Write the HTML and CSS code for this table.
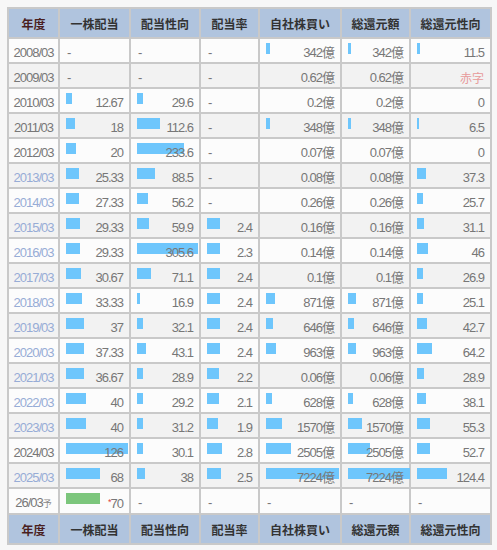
FILE: index.html
```html
<!DOCTYPE html>
<html lang="ja">
<head>
<meta charset="utf-8">
<link rel="stylesheet" href="styles.css">
</head>
<body>
<table class="tbl">
<colgroup>
<col class="c-year"><col class="c-div"><col class="c-pay"><col class="c-rate"><col class="c-buy"><col class="c-tot"><col class="c-totp">
</colgroup>
<thead>
<tr class="head"><th class="h-year">年度</th><th>一株配当</th><th>配当性向</th><th>配当率</th><th>自社株買い</th><th>総還元額</th><th>総還元性向</th></tr>
</thead>
<tbody>
<tr class="odd"><td class="yr">2008/03</td><td class="na">-</td><td class="na">-</td><td class="na">-</td><td class="num"><span class="bar" style="width:3.5px"></span>342億</td><td class="num"><span class="bar" style="width:2.9px"></span>342億</td><td class="num"><span class="bar" style="width:2.7px"></span>11.5</td></tr>
<tr class="even"><td class="yr">2009/03</td><td class="na">-</td><td class="na">-</td><td class="na">-</td><td class="num">0.62億</td><td class="num">0.62億</td><td class="num red">赤字</td></tr>
<tr class="odd"><td class="yr">2010/03</td><td class="num"><span class="bar" style="width:6.2px"></span>12.67</td><td class="num"><span class="bar" style="width:5.9px"></span>29.6</td><td class="na">-</td><td class="num">0.2億</td><td class="num">0.2億</td><td class="num">0</td></tr>
<tr class="even"><td class="yr">2011/03</td><td class="num"><span class="bar" style="width:8.9px"></span>18</td><td class="num"><span class="bar" style="width:22.6px"></span>112.6</td><td class="na">-</td><td class="num"><span class="bar" style="width:3.5px"></span>348億</td><td class="num"><span class="bar" style="width:3px"></span>348億</td><td class="num"><span class="bar" style="width:1.6px"></span>6.5</td></tr>
<tr class="odd"><td class="yr">2012/03</td><td class="num"><span class="bar" style="width:9.8px"></span>20</td><td class="num"><span class="bar" style="width:46.9px"></span>233.6</td><td class="na">-</td><td class="num">0.07億</td><td class="num">0.07億</td><td class="num">0</td></tr>
<tr class="even"><td class="yr lk">2013/03</td><td class="num"><span class="bar" style="width:12.5px"></span>25.33</td><td class="num"><span class="bar" style="width:17.8px"></span>88.5</td><td class="na">-</td><td class="num">0.08億</td><td class="num">0.08億</td><td class="num"><span class="bar" style="width:8.9px"></span>37.3</td></tr>
<tr class="odd"><td class="yr lk">2014/03</td><td class="num"><span class="bar" style="width:13.4px"></span>27.33</td><td class="num"><span class="bar" style="width:11.3px"></span>56.2</td><td class="na">-</td><td class="num">0.26億</td><td class="num">0.26億</td><td class="num"><span class="bar" style="width:6.1px"></span>25.7</td></tr>
<tr class="even"><td class="yr lk">2015/03</td><td class="num"><span class="bar" style="width:14.4px"></span>29.33</td><td class="num"><span class="bar" style="width:12px"></span>59.9</td><td class="num"><span class="bar" style="width:13.3px"></span>2.4</td><td class="num">0.16億</td><td class="num">0.16億</td><td class="num"><span class="bar" style="width:7.4px"></span>31.1</td></tr>
<tr class="odd"><td class="yr lk">2016/03</td><td class="num"><span class="bar" style="width:14.4px"></span>29.33</td><td class="num"><span class="bar" style="width:61.3px"></span>305.6</td><td class="num"><span class="bar" style="width:12.8px"></span>2.3</td><td class="num">0.14億</td><td class="num">0.14億</td><td class="num"><span class="bar" style="width:11px"></span>46</td></tr>
<tr class="even"><td class="yr lk">2017/03</td><td class="num"><span class="bar" style="width:15.1px"></span>30.67</td><td class="num"><span class="bar" style="width:14.3px"></span>71.1</td><td class="num"><span class="bar" style="width:13.3px"></span>2.4</td><td class="num">0.1億</td><td class="num">0.1億</td><td class="num"><span class="bar" style="width:6.4px"></span>26.9</td></tr>
<tr class="odd"><td class="yr lk">2018/03</td><td class="num"><span class="bar" style="width:16.4px"></span>33.33</td><td class="num"><span class="bar" style="width:3.4px"></span>16.9</td><td class="num"><span class="bar" style="width:13.3px"></span>2.4</td><td class="num"><span class="bar" style="width:8.8px"></span>871億</td><td class="num"><span class="bar" style="width:7.5px"></span>871億</td><td class="num"><span class="bar" style="width:6px"></span>25.1</td></tr>
<tr class="even"><td class="yr lk">2019/03</td><td class="num"><span class="bar" style="width:18.2px"></span>37</td><td class="num"><span class="bar" style="width:6.4px"></span>32.1</td><td class="num"><span class="bar" style="width:13.3px"></span>2.4</td><td class="num"><span class="bar" style="width:6.5px"></span>646億</td><td class="num"><span class="bar" style="width:5.6px"></span>646億</td><td class="num"><span class="bar" style="width:10.2px"></span>42.7</td></tr>
<tr class="odd"><td class="yr lk">2020/03</td><td class="num"><span class="bar" style="width:18.4px"></span>37.33</td><td class="num"><span class="bar" style="width:8.6px"></span>43.1</td><td class="num"><span class="bar" style="width:13.3px"></span>2.4</td><td class="num"><span class="bar" style="width:9.7px"></span>963億</td><td class="num"><span class="bar" style="width:8.3px"></span>963億</td><td class="num"><span class="bar" style="width:15.3px"></span>64.2</td></tr>
<tr class="even"><td class="yr lk">2021/03</td><td class="num"><span class="bar" style="width:18px"></span>36.67</td><td class="num"><span class="bar" style="width:5.8px"></span>28.9</td><td class="num"><span class="bar" style="width:12.2px"></span>2.2</td><td class="num">0.06億</td><td class="num">0.06億</td><td class="num"><span class="bar" style="width:6.9px"></span>28.9</td></tr>
<tr class="odd"><td class="yr lk">2022/03</td><td class="num"><span class="bar" style="width:19.7px"></span>40</td><td class="num"><span class="bar" style="width:5.9px"></span>29.2</td><td class="num"><span class="bar" style="width:11.7px"></span>2.1</td><td class="num"><span class="bar" style="width:6.3px"></span>628億</td><td class="num"><span class="bar" style="width:5.4px"></span>628億</td><td class="num"><span class="bar" style="width:9.1px"></span>38.1</td></tr>
<tr class="even"><td class="yr lk">2023/03</td><td class="num"><span class="bar" style="width:19.7px"></span>40</td><td class="num"><span class="bar" style="width:6.3px"></span>31.2</td><td class="num"><span class="bar" style="width:10.5px"></span>1.9</td><td class="num"><span class="bar" style="width:15.9px"></span>1570億</td><td class="num"><span class="bar" style="width:13.5px"></span>1570億</td><td class="num"><span class="bar" style="width:13.2px"></span>55.3</td></tr>
<tr class="odd"><td class="yr">2024/03</td><td class="num"><span class="bar" style="width:62px"></span>126</td><td class="num"><span class="bar" style="width:6px"></span>30.1</td><td class="num"><span class="bar" style="width:14.5px"></span>2.8</td><td class="num"><span class="bar" style="width:25.3px"></span>2505億</td><td class="num"><span class="bar" style="width:21.6px"></span>2505億</td><td class="num"><span class="bar" style="width:12.6px"></span>52.7</td></tr>
<tr class="even"><td class="yr lk">2025/03</td><td class="num"><span class="bar" style="width:33.5px"></span>68</td><td class="num"><span class="bar" style="width:7.6px"></span>38</td><td class="num"><span class="bar" style="width:13.9px"></span>2.5</td><td class="num"><span class="bar" style="width:73px"></span>7224億</td><td class="num"><span class="bar" style="width:62.3px"></span>7224億</td><td class="num"><span class="bar" style="width:29.7px"></span>124.4</td></tr>
<tr class="odd"><td class="yr">26/03<span class="yo">予</span></td><td class="num"><span class="bar green" style="width:34.4px"></span><span class="ast">*</span>70</td><td class="na">-</td><td class="na">-</td><td class="na">-</td><td class="na">-</td><td class="na">-</td></tr>
</tbody>
<tfoot>
<tr class="head"><th class="h-year">年度</th><th>一株配当</th><th>配当性向</th><th>配当率</th><th>自社株買い</th><th>総還元額</th><th>総還元性向</th></tr>
</tfoot>
</table>
</body>
</html>
```

FILE: styles.css
```css
html, body {
  margin: 0;
  padding: 0;
  background: #f7f7f7;
}
body {
  padding: 7px;
  font-family: "Liberation Sans", "Noto Sans CJK JP", sans-serif;
  font-size: 13px;
  letter-spacing: -1px;
  color: #777;
}
.tbl {
  border-collapse: collapse;
  table-layout: fixed;
  width: 483px;
}
.c-year { width: 51px; }
.c-div { width: 71px; }
.c-pay { width: 70px; }
.c-rate { width: 59px; }
.c-buy { width: 82px; }
.c-tot { width: 69px; }
.c-totp { width: 81px; }

.tbl th,
.tbl td {
  border: 2px solid #c9c9c9;
  padding: 0;
}
.tbl .head {
  height: 30px;
}
.tbl .head th {
  background: #b0c4de;
  font-family: "Noto Sans CJK JP", sans-serif;
  font-weight: bold;
  font-size: 12px;
  letter-spacing: 0;
  color: #333;
  text-align: center;
  vertical-align: middle;
}
.tbl .head .h-year {
  color: #4a1f1f;
}
.tbl tbody tr {
  height: 25px;
}
.tbl tr.odd td {
  background: #fcfcfc;
}
.tbl tr.even td {
  background: #f2f2f2;
}
.tbl tbody td {
  position: relative;
  z-index: 0;
  vertical-align: middle;
  padding-top: 4px;
  white-space: nowrap;
  line-height: 18px;
}
.tbl td.yr {
  text-align: center;
}
.tbl td.yr.lk {
  color: #97acd6;
}
.yo {
  font-size: 9px;
  color: #888;
  letter-spacing: 0;
  font-family: "Noto Sans CJK JP", sans-serif;
}
.tbl td.na {
  text-align: left;
  padding-left: 7px;
}
.tbl td.num {
  text-align: right;
  padding-right: 6px;
}
.tbl td.red {
  color: #e79a9a;
  font-family: "Noto Sans CJK JP", sans-serif;
  font-size: 12px;
  letter-spacing: 0;
}
.ast {
  color: #e04040;
  font-size: 9px;
  vertical-align: 3px;
}
.bar {
  position: absolute;
  z-index: -1;
  left: 6px;
  top: 4px;
  height: 11px;
  background: #6ec6fc;
}
.bar.green {
  background: #7cc67c;
}
```
